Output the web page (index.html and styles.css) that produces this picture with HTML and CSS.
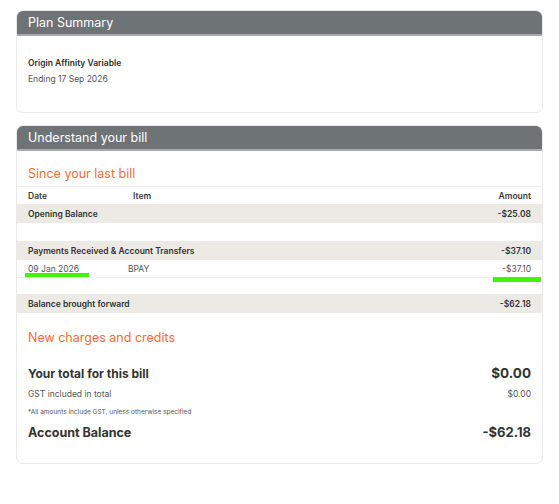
FILE: index.html
```html
<!DOCTYPE html>
<html>
<head>
<meta charset="utf-8">
<link rel="stylesheet" href="styles.css">
</head>
<body>
<div class="page">
  <section class="card plan">
    <div class="card-head">Plan Summary</div>
    <div class="plan-body">
      <div class="plan-name">Origin Affinity Variable</div>
      <div class="plan-end">Ending 17 Sep 2026</div>
    </div>
  </section>

  <section class="card bill">
    <div class="card-head">Understand your bill</div>
    <h2 class="sec-title first">Since your last bill</h2>
    <div class="row thead">
      <span class="c-date">Date</span><span class="c-item">Item</span><span class="c-amt">Amount</span>
    </div>
    <div class="row shaded bold-row">
      <span class="c-label">Opening Balance</span><span class="c-amt">-$25.08</span>
    </div>
    <div class="row blank"></div>
    <div class="row shaded bold-row">
      <span class="c-label">Payments Received &amp; Account Transfers</span><span class="c-amt">-$37.10</span>
    </div>
    <div class="row txn">
      <span class="c-date">09 Jan 2026</span><span class="c-item">BPAY</span><span class="c-amt">-$37.10</span>
      <i class="mark mark-date"></i><i class="mark mark-amt"></i>
    </div>
    <div class="row blank short"></div>
    <div class="row shaded bold-row">
      <span class="c-label">Balance brought forward</span><span class="c-amt">-$62.18</span>
    </div>
    <h2 class="sec-title second">New charges and credits</h2>
    <div class="total-row">
      <span class="total-label">Your total for this bill</span><span class="total-amt">$0.00</span>
    </div>
    <div class="gst-row">
      <span>GST included in total</span><span>$0.00</span>
    </div>
    <div class="note">*All amounts include GST, unless otherwise specified</div>
    <div class="total-row balance">
      <span class="total-label">Account Balance</span><span class="total-amt">-$62.18</span>
    </div>
  </section>
</div>
</body>
</html>
```

FILE: styles.css
```css
* { box-sizing: border-box; }
html, body { margin: 0; padding: 0; background: #fff; }
body { font-family: "Inter", "Lato", sans-serif; color: #3a3a3a; }
.page { padding: 10px 16px 0 16px; width: 559px; }

.card {
  border: 1px solid #e9e9e9;
  border-radius: 7px;
  overflow: hidden;
  background: #fff;
}
.card-head {
  background: #6e7375;
  color: #fff;
  height: 25px;
  border-bottom: 2px solid #a7abad;
  padding-left: 11px;
  font-size: 12.5px;
  line-height: 23px;
}

.plan { height: 103px; }
.plan-body { padding: 21px 11px 0 11px; }
.plan-name { font-size: 8.5px; font-weight: 600; color: #2f2f2f; line-height: 12px; }
.plan-end { font-size: 8.5px; color: #555; line-height: 12px; margin-top: 4px; }

.bill { margin-top: 12px; height: 339px; }

.sec-title {
  margin: 0;
  font-weight: 400;
  color: #f26b3a;
  font-size: 12.5px;
  line-height: 16px;
  padding: 0 11px;
}
.sec-title.first { padding-top: 15px; height: 36px; border-bottom: 1px solid #f0f0ee; }
.sec-title.second { padding-top: 17px; height: 49px; }

.row {
  position: relative;
  display: flex;
  align-items: center;
  height: 18px;
  padding: 0 11px;
  font-size: 8.5px;
}
.thead { height: 17px; font-weight: 600; color: #3a3a3a; }
.shaded { background: #ebeae5; height: 19px; }
.bold-row { font-weight: 600; color: #333; }
.blank { height: 18px; }
.blank.short { height: 16px; }
.txn { height: 18px; color: #555; border-bottom: 1px solid #f0f0ee; }

.c-date { width: 105px; }
.c-item { flex: 1; }
.c-label { flex: 1; }
.c-amt { margin-left: auto; text-align: right; }
.txn .c-date { width: 100px; }

.mark { position: absolute; background: #44f20a; height: 4px; }
.mark-date { left: 8px; width: 64px; top: 13px; }
.mark-amt { right: 1px; width: 48px; top: 17px; height: 5px; }

.total-row {
  display: flex;
  justify-content: space-between;
  align-items: center;
  padding: 0 11px;
  height: 22px;
  font-weight: 700;
  color: #333;
}
.total-label { font-size: 12px; }
.total-amt { font-size: 13.5px; }
.gst-row {
  display: flex;
  justify-content: space-between;
  align-items: center;
  padding: 0 11px;
  font-size: 8.5px;
  color: #555;
  height: 20px;
}
.note {
  padding: 0 11px;
  font-size: 6.5px;
  color: #555;
  height: 17px;
  line-height: 17px;
}
.balance .total-label { font-size: 12.5px; }
.balance .total-amt { font-size: 13px; }
```
